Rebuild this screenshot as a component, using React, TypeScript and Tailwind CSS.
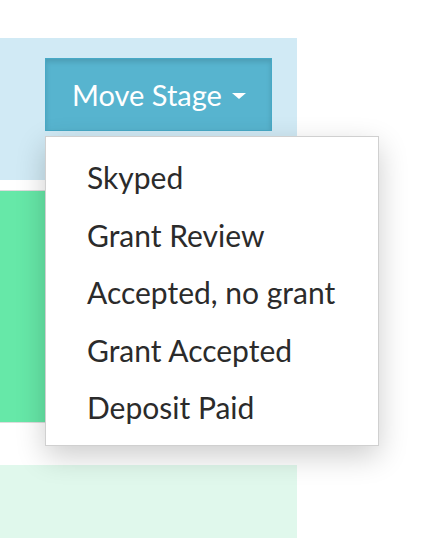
const stages = ["Skyped", "Grant Review", "Accepted, no grant", "Grant Accepted", "Deposit Paid"]

export default function App() {
  return (
    <div className="relative w-[430px] h-[538px] overflow-hidden bg-white font-['Lato',sans-serif]">
      <div className="w-[297px] pt-[38px]">
        <div className="h-[142px] bg-[#d1eaf5] pt-[20px] pl-[45px]">
          <button className="flex h-[73px] w-[227px] items-center gap-[10px] border border-[#47a9c6] bg-[#57b4cf] pl-[26px] text-[29px] text-white shadow-[inset_0_3px_5px_rgba(0,0,0,0.125)]">
            <span>Move Stage</span>
            <span className="mt-[2px] h-0 w-0 border-x-[7px] border-t-[6px] border-x-transparent border-t-white" />
          </button>
        </div>
        <div className="mt-[10px] h-[233px] border-y border-[#dddddd] bg-[#66e8a8]" />
        <div className="mt-[42px] h-[80px] bg-[#e0f8ec]" />
      </div>
      <ul className="absolute left-[45px] top-[136px] w-[334px] border border-[#d0d0d0] bg-white pt-[12px] pb-[8px] shadow-[0_10px_28px_rgba(0,0,0,0.2)]">
        {stages.map((s) => (
          <li key={s} className="h-[57.5px] pl-[41px] text-[30px] leading-[57.5px] text-[#2b2b2b]">
            {s}
          </li>
        ))}
      </ul>
    </div>
  )
}
